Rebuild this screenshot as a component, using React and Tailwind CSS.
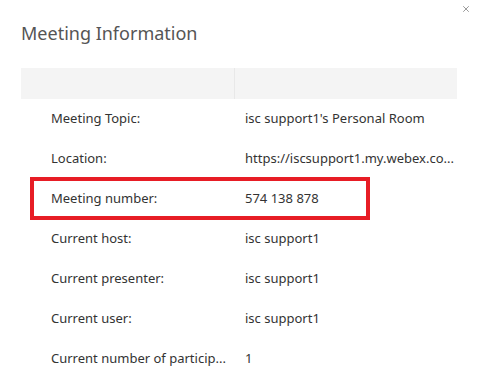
import { X } from "lucide-react";

const rows = [
  ["Meeting Topic:", "isc support1's Personal Room"],
  ["Location:", "https://iscsupport1.my.webex.co..."],
  ["Meeting number:", "574 138 878"],
  ["Current host:", "isc support1"],
  ["Current presenter:", "isc support1"],
  ["Current user:", "isc support1"],
  ["Current number of particip...", "1"],
];

export default function App() {
  return (
    <div
      className="relative w-[481px] h-[386px] bg-white overflow-hidden"
      style={{ fontFamily: '"Noto Sans", "Open Sans", sans-serif' }}
    >
      {/* close */}
      <button className="absolute right-[10px] top-[4px] text-[#666]">
        <X size={10} strokeWidth={1.6} />
      </button>

      <h1 className="pl-[21px] pt-[20px] text-[18px] leading-[26px] text-[#555] font-normal">
        Meeting Information
      </h1>

      <div className="ml-[21px] mt-[22px] w-[436px]">
        {/* header band */}
        <div className="flex h-[31px] bg-[#f4f4f4]">
          <div className="w-[214px] border-r border-[#e8e8e8]" />
          <div className="flex-1" />
        </div>

        {rows.map(([label, value], i) => (
          <div key={label} className="relative flex h-[40px] items-center text-[13px] text-[#333]">
            {i === 2 && (
              <div className="absolute left-[9px] top-[-2px] w-[340px] h-[43px] border-[4px] border-[#e71d25]" />
            )}
            <div className="w-[214px] pl-[30px] truncate">{label}</div>
            <div className="flex-1 pl-[10px] truncate">{value}</div>
          </div>
        ))}
      </div>
    </div>
  );
}
